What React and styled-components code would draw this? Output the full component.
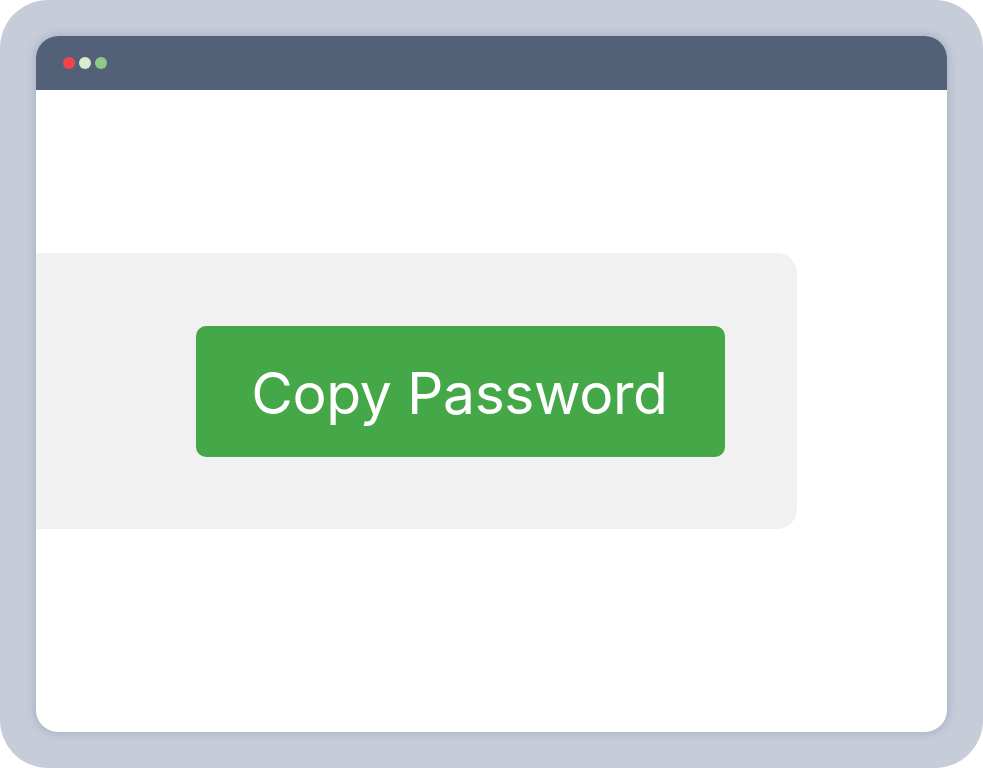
import React from "react";
import styled, { createGlobalStyle } from "styled-components";

const Global = createGlobalStyle`
  html, body { margin: 0; padding: 0; background: #ffffff; }
  body { font-family: Inter, "Noto Sans", sans-serif; }
`;

const Frame = styled.div`
  box-sizing: border-box;
  width: 983px;
  height: 768px;
  border-radius: 48px;
  background: #c6ccd8;
  padding: 36px;
  display: flex;
`;

const Window = styled.div`
  flex: 1;
  display: flex;
  flex-direction: column;
  background: #ffffff;
  border-radius: 22px;
  overflow: hidden;
  box-shadow: 0 0 6px 3px rgba(150, 160, 185, 0.45);
`;

const TitleBar = styled.div`
  height: 54px;
  flex: none;
  background: #536178;
  display: flex;
  align-items: center;
  gap: 4px;
  padding-left: 27px;
`;

const Dot = styled.span`
  width: 12px;
  height: 12px;
  border-radius: 50%;
  background: ${(p) => p.$color};
`;

const Content = styled.div`
  flex: 1;
  padding-top: 163px;
`;

const Panel = styled.div`
  box-sizing: border-box;
  width: 761px;
  height: 276px;
  background: #f1f1f1;
  border-radius: 0 20px 20px 0;
  display: flex;
  align-items: center;
  padding-left: 160px;
`;

const Button = styled.button`
  box-sizing: border-box;
  width: 529px;
  height: 131px;
  border: none;
  border-radius: 10px;
  background: #44a748;
  color: #ffffff;
  font-family: Inter, "Noto Sans", sans-serif;
  font-size: 57px;
  font-weight: 400;
  letter-spacing: -0.4px;
  padding: 4px 2px 0 0;
  cursor: pointer;
`;

export default function App() {
  return (
    <>
      <Global />
      <Frame>
        <Window>
          <TitleBar>
            <Dot $color="#f4464a" />
            <Dot $color="#dbeccf" />
            <Dot $color="#8cc98a" />
          </TitleBar>
          <Content>
            <Panel>
              <Button>Copy Password</Button>
            </Panel>
          </Content>
        </Window>
      </Frame>
    </>
  );
}
